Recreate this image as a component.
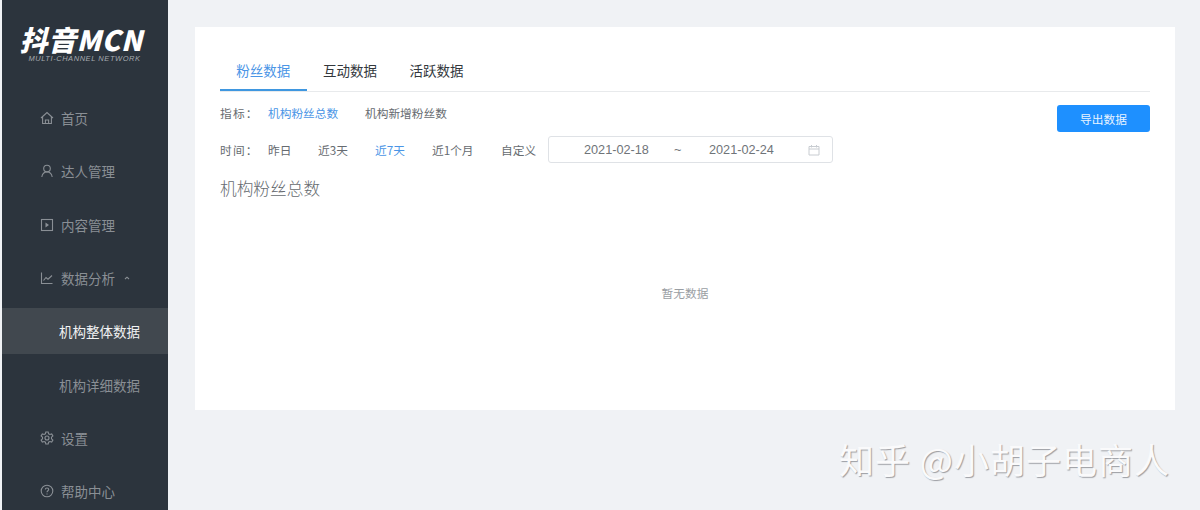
<div class="page">
  <aside class="side">
    <div class="logo">
      <div class="logo-main">抖音MCN</div>
      <div class="logo-sub">MULTI-CHANNEL NETWORK</div>
    </div>
    <nav class="menu">
      <div class="item">
        <svg viewBox="0 0 14 14"><path d="M1 7 7 1.500 13 7M2.600 6v6.500h8.800V6M5.400 12.500V9h3.200v3.500"/></svg>
        <span>首页</span>
      </div>
      <div class="item">
        <svg viewBox="0 0 14 14"><circle cx="7" cy="4.600" r="3.300"/><path d="M1.800 13c.5-3 2.400-5 5.200-5s4.700 2 5.200 5"/></svg>
        <span>达人管理</span>
      </div>
      <div class="item">
        <svg viewBox="0 0 14 14"><rect x="1.500" y="1.500" width="11" height="11"/><path class="fill" d="M5.500 4.500 9 7l-3.500 2.500z"/></svg>
        <span>内容管理</span>
      </div>
      <div class="item">
        <svg viewBox="0 0 14 14"><path d="M1.500 1.500v11h11M3.500 9.500 6 6.500l2 1.700 4-3.700"/></svg>
        <span>数据分析</span>
        <svg class="caret" viewBox="0 0 8 6"><path d="M2 4 4 2.200 6 4"/></svg>
      </div>
      <div class="item sub active"><span>机构整体数据</span></div>
      <div class="item sub"><span>机构详细数据</span></div>
      <div class="item">
        <svg viewBox="0 0 14 14"><path d="M5.800 1h2.400l.4 1.800 1.300.7 1.800-.6 1.200 2.100-1.400 1.200v1.600l1.400 1.200-1.200 2.100-1.800-.6-1.300.7-.4 1.800H5.800l-.4-1.800-1.300-.7-1.800.6-1.200-2.100 1.400-1.200V6.200L1.100 5l1.200-2.100 1.800.6 1.300-.7z"/><circle cx="7" cy="7" r="2"/></svg>
        <span>设置</span>
      </div>
      <div class="item">
        <svg viewBox="0 0 14 14"><circle cx="7" cy="7" r="5.800"/><path d="M5.300 5.600C5.300 4.600 6 4 7 4s1.700.6 1.700 1.500C8.700 6.800 7 6.800 7 8.300M7 9.600v.9"/></svg>
        <span>帮助中心</span>
      </div>
    </nav>
  </aside>

  <main class="main">
    <section class="card">
      <div class="tabs">
        <div class="tab on">粉丝数据</div>
        <div class="tab">互动数据</div>
        <div class="tab">活跃数据</div>
      </div>

      <div class="filters">
        <div class="filter-col">
          <div class="row metrics">
            <span class="label">指标：</span>
            <span class="blue">机构粉丝总数</span>
            <span>机构新增粉丝数</span>
          </div>
          <div class="row times">
            <span class="label">时间：</span>
            <span>昨日</span>
            <span>近3天</span>
            <span class="blue">近7天</span>
            <span>近1个月</span>
            <span>自定义</span>
            <div class="range">
              <span class="d1">2021-02-18</span>
              <span class="tilde">~</span>
              <span class="d2">2021-02-24</span>
              <svg viewBox="0 0 12 12"><path d="M1 2.500h10v8.500H1zM1 5h10M3.500 1v2.500M8.500 1v2.500"/></svg>
            </div>
          </div>
        </div>
        <button class="export">导出数据</button>
      </div>

      <h2 class="title">机构粉丝总数</h2>
      <div class="empty">暂无数据</div>
    </section>
  </main>

  <div class="mark">知乎 @小胡子电商人</div>
</div>

<style>
  :global(body) {
    margin: 0;
    background: #f0f2f5;
  }
  .page {
    position: relative;
    display: flex;
    width: 1200px;
    height: 510px;
    overflow: hidden;
    font-family: "Noto Sans CJK SC", "Liberation Sans", sans-serif;
    background: #f0f2f5;
  }
  .side {
    flex: none;
    width: 166px;
    margin-left: 2px;
    background: #2c343d;
    display: flex;
    flex-direction: column;
  }
  .logo {
    flex: none;
    height: 95px;
    box-sizing: border-box;
    padding-top: 25px;
    text-align: center;
    color: #fff;
  }
  .logo-main {
    font: italic 900 28px/28px "Noto Sans CJK SC", "Liberation Sans", sans-serif;
    letter-spacing: .5px;
    margin-left: -8px;
    white-space: nowrap;
  }
  .logo-sub {
    font: italic 7.500px/9px "Liberation Sans", sans-serif;
    letter-spacing: .55px;
    color: #a5a9ae;
    margin: 1px 0 0 -1px;
    white-space: nowrap;
  }
  .menu {
    flex: none;
    display: flex;
    flex-direction: column;
    gap: 7.350px;
  }
  .item {
    flex: none;
    height: 46px;
    display: flex;
    align-items: center;
    padding-left: 38px;
    color: #8a8f95;
    font-size: 13.500px;
    gap: 7px;
  }
  .item svg {
    width: 14px;
    height: 14px;
    fill: none;
    stroke: #8a8f95;
    stroke-width: 1.100;
  }
  .item svg .fill { fill: #8a8f95; stroke: none; }
  .item svg.caret { width: 8px; height: 6px; margin-left: 1px; }
  .item.sub { padding-left: 57px; }
  .item.active {
    background: #41484f;
    color: #f1f2f3;
  }
  .main {
    flex: 1;
    padding: 27px 25px 0 27px;
    min-width: 0;
  }
  .card {
    background: #fff;
    height: 383px;
    box-sizing: border-box;
    padding: 25px 25px 0;
  }
  .tabs {
    display: flex;
    height: 39px;
    border-bottom: 1px solid #e8eaec;
  }
  .tab {
    padding: 0 16.300px;
    font-size: 13.500px;
    line-height: 37px;
    color: #33383d;
    height: 39px;
    box-sizing: border-box;
  }
  .tab.on {
    color: #4a95e6;
    border-bottom: 2px solid #3f97e0;
  }
  .filters {
    display: flex;
    justify-content: space-between;
    align-items: flex-start;
  }
  .filter-col {
    display: flex;
    flex-direction: column;
  }
  .row {
    display: flex;
    align-items: center;
    font-size: 11.700px;
    color: #666b70;
    white-space: nowrap;
  }
  .label { letter-spacing: 1.200px; }
  .metrics {
    height: 22px;
    margin-top: 9px;
  }
  .metrics span:nth-child(1) { width: 48px; }
  .metrics span:nth-child(2) { width: 97px; }
  .times {
    height: 27px;
    margin-top: 13px;
  }
  .times > span:nth-child(1) { width: 48px; }
  .times > span:nth-child(2) { width: 50px; }
  .times > span:nth-child(3) { width: 57px; }
  .times > span:nth-child(4) { width: 57px; }
  .times > span:nth-child(5) { width: 69px; }
  .times > span:nth-child(6) { width: 47px; }
  .blue { color: #4a95e6; }
  .range {
    width: 285px;
    height: 27px;
    box-sizing: border-box;
    border: 1px solid #dfe2e6;
    border-radius: 3px;
    display: flex;
    align-items: center;
    font: 12.700px "Liberation Sans", sans-serif;
    color: #6f7479;
  }
  .d1 { margin-left: 35px; width: 90px; }
  .tilde { width: 35px; }
  .d2 { width: 100px; }
  .range svg {
    width: 12px;
    height: 12px;
    fill: none;
    stroke: #c8ccd1;
    stroke-width: 1;
    margin-left: -1px;
  }
  .export {
    width: 93px;
    height: 27px;
    margin-top: 13px;
    border: 0;
    border-radius: 3px;
    background: #1e90ff;
    color: #e9f4ff;
    font: 11.700px "Noto Sans CJK SC", sans-serif;
    padding: 0;
  }
  .title {
    margin: 13px 0 0;
    font-size: 16.700px;
    line-height: 24px;
    font-weight: 300;
    color: #666b70;
  }
  .empty {
    margin-top: 85px;
    text-align: center;
    font-size: 11.700px;
    line-height: 16px;
    color: #9a9ea3;
  }
  .mark {
    position: absolute;
    left: 839px;
    top: 436px;
    font-size: 35px;
    line-height: 46px;
    white-space: nowrap;
    color: #fafafb;
    text-shadow: 1px 1px 1px #9c9ea3;
    letter-spacing: 1px;
  }
</style>
